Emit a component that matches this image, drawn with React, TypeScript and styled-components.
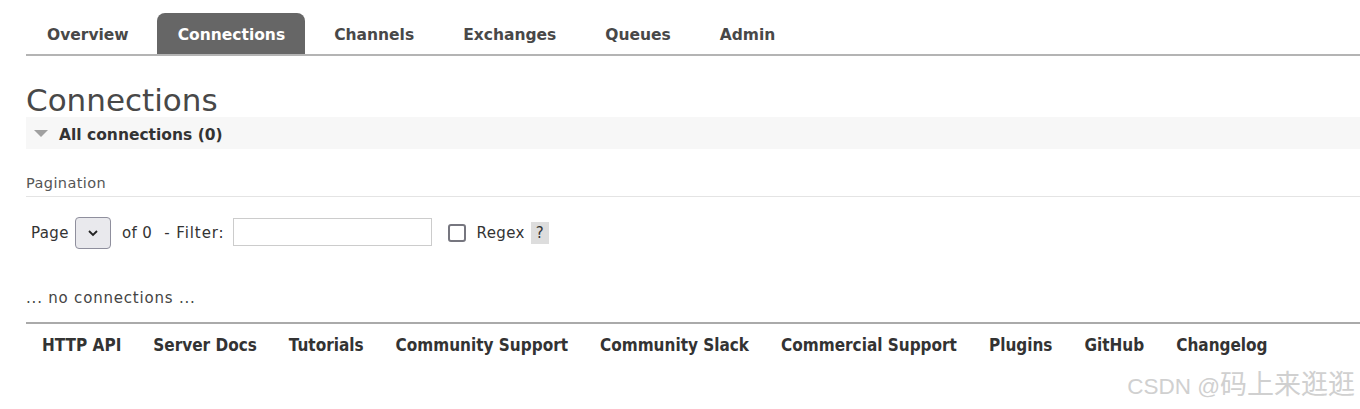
import React from "react";
import styled, { createGlobalStyle } from "styled-components";

const GlobalStyle = createGlobalStyle`
    body {
        margin: 0;
        padding: 0;
        background: #fff;
        color: #444;
        font-family: "DejaVu Sans", Verdana, sans-serif;
    }
`;

const tabs = ["Overview", "Connections", "Channels", "Exchanges", "Queues", "Admin"];
const footerLinks = [
    "HTTP API",
    "Server Docs",
    "Tutorials",
    "Community Support",
    "Community Slack",
    "Commercial Support",
    "Plugins",
    "GitHub",
    "Changelog",
];

const App = () => {
    return (
        <>
            <GlobalStyle />
            <Page>
                <TabBar>
                    {tabs.map((t) => (
                        <Tab key={t} $active={t === "Connections"}>
                            {t}
                        </Tab>
                    ))}
                </TabBar>

                <Title>Connections</Title>
                <SectionHeader>
                    <Arrow />
                    All connections (0)
                </SectionHeader>

                <SubHeading>Pagination</SubHeading>
                <FilterRow>
                    <Label>Page</Label>
                    <SelectBox>
                        <svg width="12" height="8" viewBox="0 0 12 8">
                            <path d="M2 2 L6 6 L10 2" fill="none" stroke="#222" strokeWidth="1.8" />
                        </svg>
                    </SelectBox>
                    <Label $gap={11}>of 0</Label>
                    <Label $gap={12} $wide>- Filter:</Label>
                    <TextInput type="text" />
                    <CheckBox />
                    <Label $gap={11}>Regex</Label>
                    <Help>?</Help>
                </FilterRow>

                <Empty>... no connections ...</Empty>

                <Footer>
                    {footerLinks.map((l) => (
                        <FooterLink key={l}>{l}</FooterLink>
                    ))}
                </Footer>
            </Page>
            <Watermark>
                CSDN @<Handle>码上来逛逛</Handle>
            </Watermark>
        </>
    );
};

const Page = styled.div`
    padding: 13px 0 0 26px;
`;

const TabBar = styled.div`
    display: flex;
    gap: 8px;
    border-bottom: 2px solid #b4b4b4;
    height: 41px;
`;

const Tab = styled.div<{ $active?: boolean }>`
    padding: 0 20px 0 21px;
    height: 41px;
    line-height: 44px;
    font-weight: bold;
    font-size: 15.5px;
    color: ${(p) => (p.$active ? "#fff" : "#484848")};
    background: ${(p) => (p.$active ? "#666" : "transparent")};
    border-radius: 8px 8px 0 0;
`;

const Title = styled.h1`
    margin: 27px 0 0 0;
    font-weight: normal;
    font-size: 31px;
    line-height: 34px;
    color: #484848;
`;

const SectionHeader = styled.div`
    display: flex;
    align-items: center;
    height: 32px;
    padding-top: 3px;
    box-sizing: border-box;
    background: #f7f7f7;
    font-weight: bold;
    font-size: 15.5px;
    color: #333;
`;

const Arrow = styled.span`
    width: 0;
    height: 0;
    margin: 0 11px 3px 8px;
    border-left: 7px solid transparent;
    border-right: 7px solid transparent;
    border-top: 7px solid #a0a0a0;
`;

const SubHeading = styled.div`
    margin-top: 25px;
    padding-bottom: 4px;
    border-bottom: 1px solid #e4e4e4;
    font-size: 14.5px;
    letter-spacing: 0.4px;
    line-height: 18px;
    color: #555;
`;

const FilterRow = styled.div`
    display: flex;
    align-items: center;
    margin-top: 20px;
    padding-left: 5px;
    height: 32px;
    font-size: 15px;
    letter-spacing: 0.4px;
`;

const Label = styled.span<{ $gap?: number; $wide?: boolean }>`
    margin-left: ${(p) => p.$gap ?? 0}px;
    letter-spacing: ${(p) => (p.$wide ? "0.9px" : "inherit")};
    color: #333;
`;

const SelectBox = styled.div`
    display: flex;
    align-items: center;
    justify-content: center;
    margin-left: 6px;
    width: 36px;
    height: 32px;
    border: 1px solid #8f8f9d;
    border-radius: 4px;
    background: #e9e9ed;
    box-sizing: border-box;
`;

const TextInput = styled.input`
    margin: 0 0 3px 8px;
    width: 199px;
    height: 28px;
    box-sizing: border-box;
    border: 1px solid #ccc;
    padding: 0 4px;
`;

const CheckBox = styled.span`
    margin: 0 0 1px 16px;
    width: 18px;
    height: 18px;
    box-sizing: border-box;
    border: 2px solid #76767f;
    border-radius: 3px;
`;

const Help = styled.span`
    margin-left: 6px;
    width: 18px;
    height: 22px;
    line-height: 22px;
    text-align: center;
    background: #ddd;
    color: #333;
    font-size: 15px;
`;

const Empty = styled.div`
    margin-top: 40px;
    font-size: 15px;
    letter-spacing: 0.8px;
    color: #444;
`;

const Footer = styled.div`
    display: flex;
    margin-top: 15px;
    padding: 9px 0 0 0;
    border-top: 2px solid #aaa;
`;

const FooterLink = styled.span`
    padding: 0 16px;
    font-family: "DejaVu Sans Condensed", "DejaVu Sans", sans-serif;
    font-stretch: condensed;
    font-weight: bold;
    font-size: 17px;
    line-height: 24px;
    color: #333;
`;

const Watermark = styled.div`
    position: absolute;
    right: 5px;
    top: 368px;
    font-family: "Liberation Sans", "Noto Sans CJK SC", sans-serif;
    font-size: 22.5px;
    color: #d0d0d0;
`;

const Handle = styled.span`
    font-family: "Noto Sans CJK SC", sans-serif;
    font-size: 27px;
    line-height: 30px;
`;

export default App;
